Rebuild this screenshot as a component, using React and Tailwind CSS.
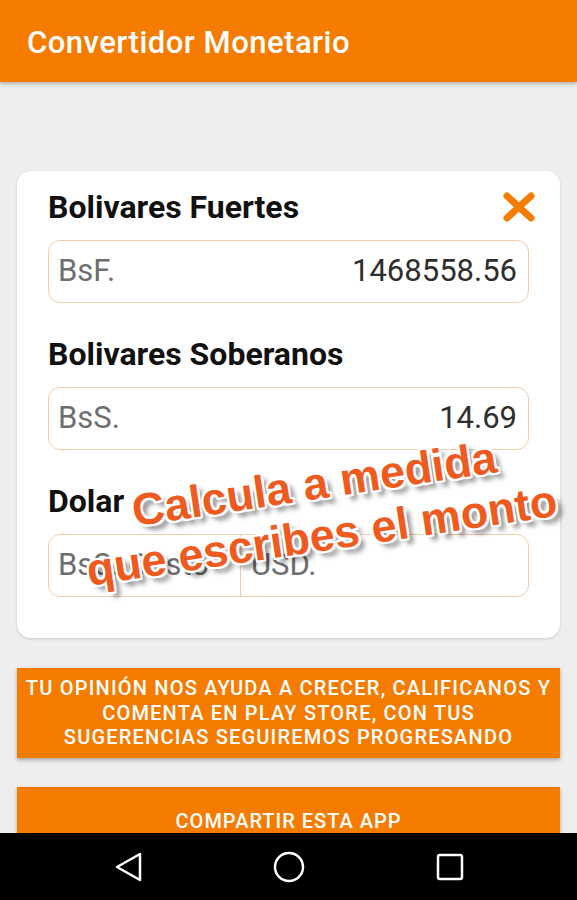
import { useState } from "react";

function Field({ prefix, value }) {
  return (
    <div className="mt-[15px] flex h-[63px] items-center justify-between rounded-[12px] border-[1.5px] border-[#f2cbab] pl-[9px] pr-[11px]">
      <span className="text-[31px] text-[#6e6e6e]">{prefix}</span>
      <span className="text-[31px] text-[#2e2e2e]">{value}</span>
    </div>
  );
}

export default function App() {
  const [values] = useState({ bsf: "1468558.56", bss: "14.69" });

  return (
    <div className="relative h-[900px] w-[577px] overflow-hidden bg-[#eeeeee] font-['Roboto',sans-serif]">
      {/* HEADER */}
      <div className="flex h-[82px] items-center bg-[#f57c00] px-[27px] pt-[5px] shadow-[0_2px_4px_rgba(0,0,0,0.25)]">
        <h1 className="text-[31px] font-medium tracking-[0.5px] text-white">Convertidor Monetario</h1>
      </div>

      {/* CARD */}
      <div className="mx-[17px] mt-[89px] rounded-[14px] bg-white px-[31px] pb-[41px] pt-[18px] shadow-[0_1px_3px_rgba(0,0,0,0.15)]">
        <div className="flex items-center justify-between">
          <h2 className="text-[32px] font-bold leading-[36px] text-[#111]">Bolivares Fuertes</h2>
          <svg width="36" height="32" viewBox="0 0 36 32" className="mr-[-8px]">
            <path d="M6 5 L30 27 M30 5 L6 27" stroke="#f57c00" strokeWidth="7" strokeLinecap="round" />
          </svg>
        </div>
        <Field prefix="BsF." value={values.bsf} />

        <h2 className="mt-[33px] text-[32px] font-bold leading-[36px] text-[#111]">Bolivares Soberanos</h2>
        <Field prefix="BsS." value={values.bss} />

        <h2 className="mt-[33px] text-[32px] font-bold leading-[36px] text-[#111]">Dolar</h2>
        <div className="mt-[15px] flex h-[63px] rounded-[12px] border-[1.5px] border-[#f2cbab]">
          <div className="flex w-[192px] items-center border-r-[1.5px] border-[#f2cbab] pl-[9px] text-[31px] text-[#6e6e6e]">
            BsS. Costo
          </div>
          <div className="flex flex-1 items-center pl-[10px] text-[31px] text-[#6e6e6e]">USD.</div>
        </div>
      </div>

      {/* BUTTONS */}
      <div className="mx-[17px] mt-[30px] flex h-[90px] items-center justify-center bg-[#f57c00] px-[4px] text-center shadow-[0_2px_4px_rgba(0,0,0,0.3)]">
        <p className="text-[20px] font-medium leading-[24.5px] tracking-[0.06em] text-white">
          TU OPINIÓN NOS AYUDA A CRECER, CALIFICANOS Y<br />
          COMENTA EN PLAY STORE, CON TUS<br />
          SUGERENCIAS SEGUIREMOS PROGRESANDO
        </p>
      </div>
      <div className="mx-[17px] mt-[29px] flex h-[100px] justify-center bg-[#f57c00] pt-[22px] shadow-[0_2px_4px_rgba(0,0,0,0.3)]">
        <p className="text-[20px] font-medium leading-[24px] tracking-[0.05em] text-white">COMPARTIR ESTA APP</p>
      </div>

      {/* OVERLAY CAPTION */}
      <div className="absolute left-[68px] top-[458px] w-[500px] -rotate-[8.5deg] text-center font-['Liberation_Sans',Arial,sans-serif] text-[45px] font-bold leading-[52px] text-[#ef5a1f] [text-shadow:2px_2px_0_#fff,-2px_-2px_0_#fff,2px_-2px_0_#fff,-2px_2px_0_#fff,0_2px_0_#fff,0_-2px_0_#fff,2px_0_0_#fff,-2px_0_0_#fff,5px_6px_5px_rgba(0,0,0,0.45)]">
        <div>Calcula a medida</div>
        <div>que escribes el monto</div>
      </div>

      {/* NAV BAR */}
      <div className="absolute bottom-0 left-0 flex h-[67px] w-full items-center justify-center gap-[130px] bg-black">
        <svg width="30" height="30" viewBox="0 0 30 30">
          <path d="M27 2 L4 15 L27 28 Z" fill="none" stroke="#fff" strokeWidth="2.5" strokeLinejoin="round" />
        </svg>
        <svg width="32" height="32" viewBox="0 0 32 32">
          <circle cx="16" cy="16" r="14" fill="none" stroke="#fff" strokeWidth="2.5" />
        </svg>
        <svg width="30" height="30" viewBox="0 0 30 30">
          <rect x="3" y="3" width="24" height="24" rx="2" fill="none" stroke="#fff" strokeWidth="2.5" />
        </svg>
      </div>
    </div>
  );
}
